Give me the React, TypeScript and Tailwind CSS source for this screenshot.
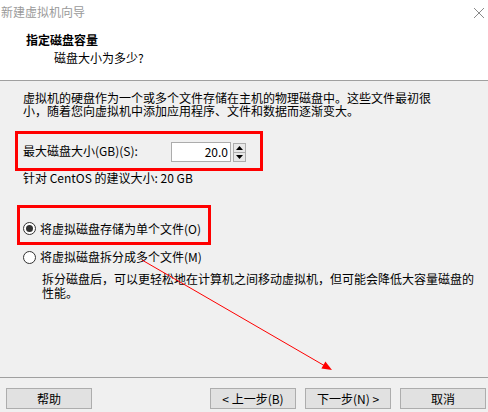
import React from 'react';

const Radio: React.FC<{ checked?: boolean }> = ({ checked }) => (
  <span className="w-[13px] h-[13px] rounded-full border border-[#333333] bg-white flex items-center justify-center shrink-0">
    {checked && <span className="w-[7px] h-[7px] rounded-full bg-[#333333]" />}
  </span>
);

const WizButton: React.FC<{ label: string; className?: string }> = ({ label, className = '' }) => (
  <button
    className={`h-[21px] border border-[#adadad] bg-[#e1e1e1] text-[12px] leading-[19px] text-black flex items-center justify-center ${className}`}
  >
    {label}
  </button>
);

// one text line in a fixed-height row so that stacked lines keep their own box
const Line: React.FC<{ h: number; children: React.ReactNode }> = ({ h, children }) => (
  <div className="whitespace-nowrap overflow-visible flex items-center" style={{ height: h }}>
    <span className="leading-[12px]">{children}</span>
  </div>
);

const App: React.FC = () => {
  return (
    <div className="w-[488px] h-[412px] bg-[#f0f0f0] flex flex-col relative overflow-hidden font-['Noto_Sans_CJK_SC',sans-serif] text-[12px] text-black">
      {/* Header */}
      <div className="h-[81px] bg-white border-b border-[#a0a0a0] shrink-0">
        <div className="flex items-center justify-between pt-[4px] pl-[1px] pr-[3px] h-[20px]">
          <span className="text-[#9a9a9a] leading-[16px]">新建虚拟机向导</span>
          <svg width="12" height="12" viewBox="0 0 12 12" className="mt-[2px]">
            <path d="M1 1 L11 11 M11 1 L1 11" stroke="#8a8a8a" strokeWidth="1" fill="none" />
          </svg>
        </div>
        <div className="ml-[26px] mt-[12px] font-bold leading-[16px]">指定磁盘容量</div>
        <div className="ml-[54px] mt-[2px] leading-[16px]">磁盘大小为多少?</div>
      </div>

      {/* Body */}
      <div className="px-[23px] flex flex-col">
        <div className="mt-[10px]">
          <Line h={13}>虚拟机的硬盘作为一个或多个文件存储在主机的物理磁盘中。这些文件最初很</Line>
          <Line h={13}>小，随着您向虚拟机中添加应用程序、文件和数据而逐渐变大。</Line>
        </div>

        <div className="ml-[-8px] mt-[14px] w-[248px] h-[40px] border-[3px] border-[#ff0000] flex items-center pl-[5px] pr-[14px]">
          <span className="leading-[14px]">最大磁盘大小(GB)(S):</span>
          <div className="ml-auto flex items-center gap-[2px] mt-[2px]">
            <div className="w-[60px] h-[20px] bg-white border border-[#acacac] flex items-center justify-end pr-[2px] leading-[16px]">
              20.0
            </div>
            <div className="flex flex-col w-[13px] h-[19px]">
              <div className="flex-1 border border-[#adadad] bg-[#e8e8e8] flex items-center justify-center">
                <svg width="7" height="4" viewBox="0 0 7 4">
                  <path d="M0 4 L3.5 0 L7 4 Z" fill="#000" />
                </svg>
              </div>
              <div className="flex-1 border border-t-0 border-[#adadad] bg-[#e8e8e8] flex items-center justify-center">
                <svg width="7" height="4" viewBox="0 0 7 4">
                  <path d="M0 0 L7 0 L3.5 4 Z" fill="#000" />
                </svg>
              </div>
            </div>
          </div>
        </div>

        <div className="leading-[14px]">针对 CentOS 的建议大小: 20 GB</div>

        <div className="ml-[-6px] mt-[20px] w-[194px] h-[40px] border-[3px] border-[#ff0000] flex items-center pt-[7px] pl-[3px] gap-[4px]">
          <Radio checked />
          <span className="leading-[14px]">将虚拟磁盘存储为单个文件(O)</span>
        </div>

        <div className="mt-[5px] flex items-center gap-[4px] h-[14px]">
          <Radio />
          <span className="leading-[14px]">将虚拟磁盘拆分成多个文件(M)</span>
        </div>

        <div className="ml-[19px] mt-[8px]">
          <Line h={14}>拆分磁盘后，可以更轻松地在计算机之间移动虚拟机，但可能会降低大容量磁盘的</Line>
          <Line h={14}>性能。</Line>
        </div>
      </div>

      <div className="flex-1" />

      {/* Footer */}
      <div className="border-t border-[#a0a0a0] shrink-0">
        <div className="flex items-center mt-[10px] mb-[3px] pl-[6px] pr-[2px]">
          <WizButton label="帮助" className="w-[86px]" />
          <div className="ml-auto flex items-center">
            <WizButton label="< 上一步(B)" className="w-[86px]" />
            <WizButton label="下一步(N) >" className="w-[86px] ml-[9px]" />
            <WizButton label="取消" className="w-[86px] ml-[9px]" />
          </div>
        </div>
      </div>

      {/* Annotation arrow */}
      <svg className="absolute inset-0 pointer-events-none" width="488" height="412" viewBox="0 0 488 412">
        <line x1="142" y1="260" x2="325" y2="366" stroke="#ff0000" strokeWidth="1" />
        <polygon points="332,370 321.4,368.5 325.4,361.5" fill="#ff0000" />
      </svg>
    </div>
  );
};

export default App;
